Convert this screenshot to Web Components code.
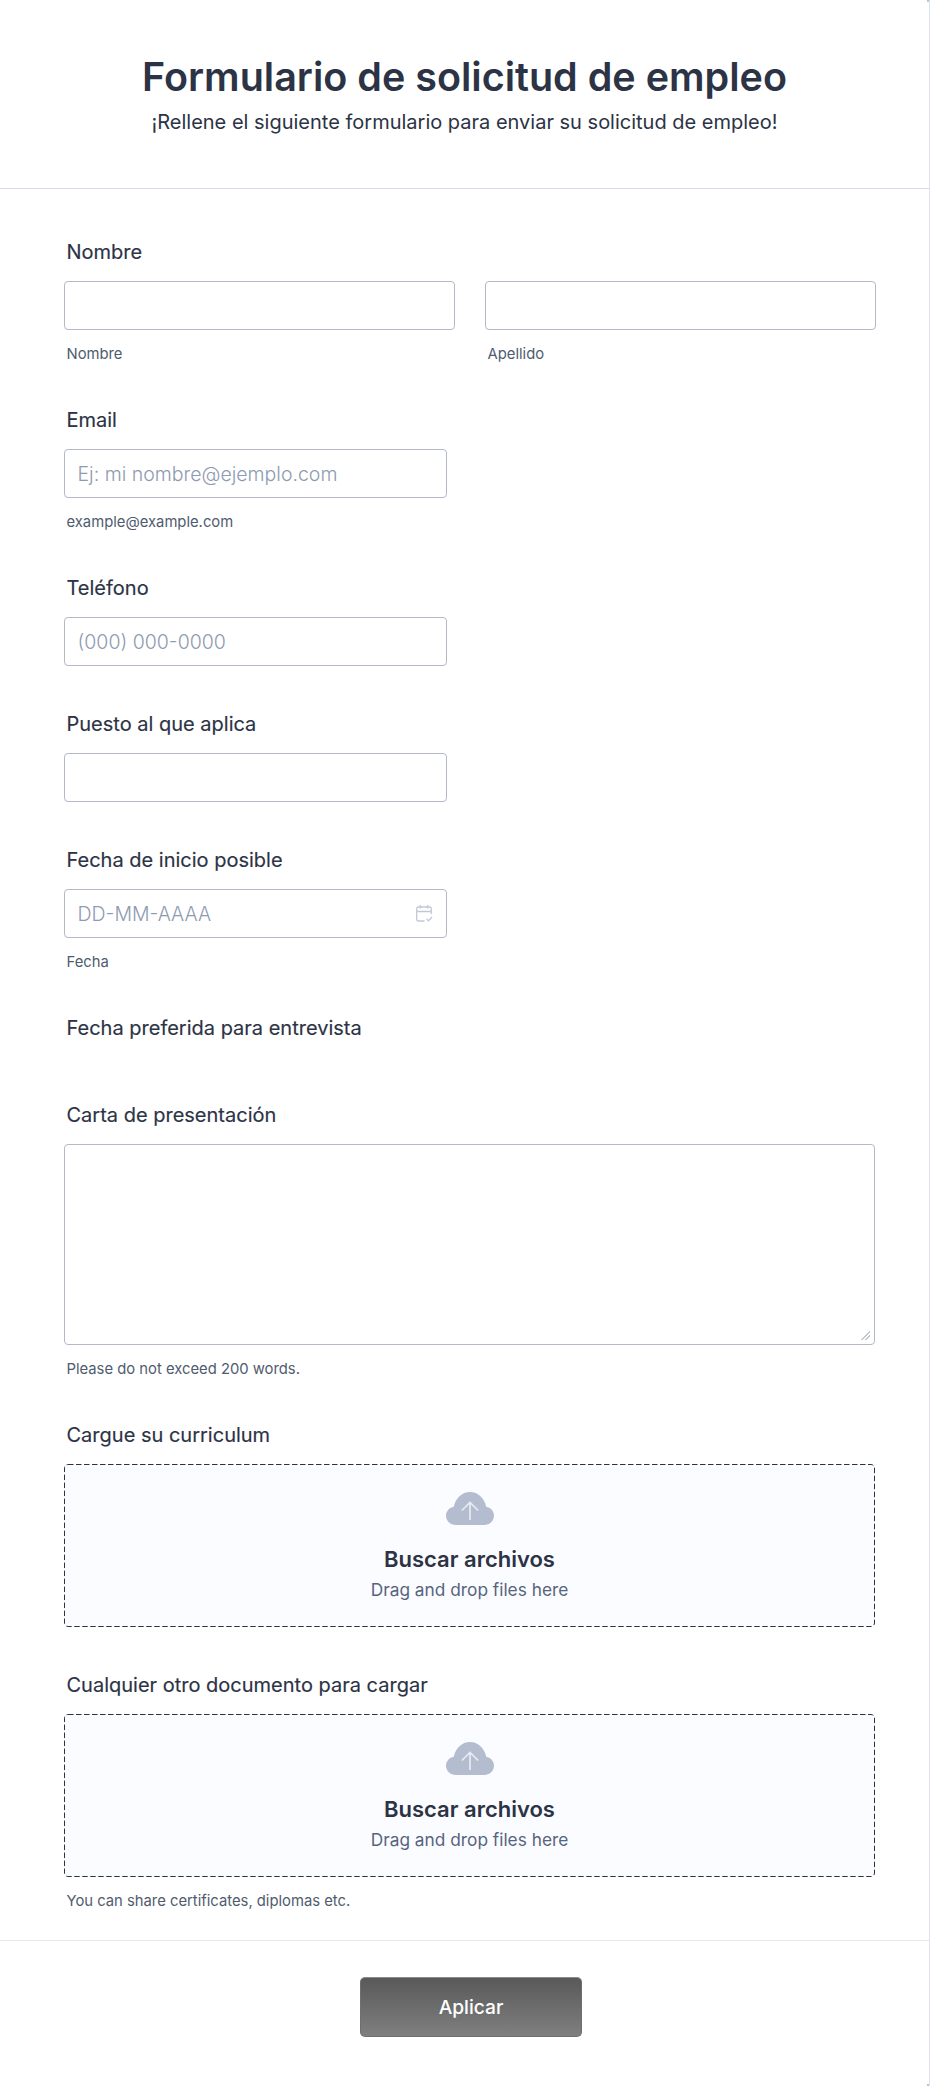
<!DOCTYPE html>
<html lang="es"><head><meta charset="utf-8"><title>Formulario de solicitud de empleo</title>
<style>
html,body{margin:0;padding:0;background:#fff}
body{font-family:Inter,"Liberation Sans",sans-serif;color:#2c3345}
</style></head><body>
<job-form>
  <form-header slot="header" title="Formulario de solicitud de empleo" sub="¡Rellene el siguiente formulario para enviar su solicitud de empleo!"></form-header>

  <form-field label="Nombre" first>
    <div style="display:grid;grid-template-columns:391px 391px;column-gap:30px">
      <text-box sub="Nombre" full></text-box>
      <text-box sub="Apellido" full></text-box>
    </div>
  </form-field>
  <form-field label="Email"><text-box placeholder="Ej: mi nombre@ejemplo.com" sub="example@example.com"></text-box></form-field>
  <form-field label="Teléfono"><text-box placeholder="(000) 000-0000"></text-box></form-field>
  <form-field label="Puesto al que aplica"><text-box></text-box></form-field>
  <form-field label="Fecha de inicio posible"><text-box placeholder="DD-MM-AAAA" sub="Fecha" calendar></text-box></form-field>
  <form-field label="Fecha preferida para entrevista"></form-field>
  <form-field label="Carta de presentación"><area-box sub="Please do not exceed 200 words."></area-box></form-field>
  <form-field label="Cargue su curriculum"><drop-zone></drop-zone></form-field>
  <form-field label="Cualquier otro documento para cargar"><drop-zone sub="You can share certificates, diplomas etc."></drop-zone></form-field>

  <form-footer slot="footer" label="Aplicar"></form-footer>
</job-form>
<script>
function def(name, css, html){
  customElements.define(name, class extends HTMLElement{
    connectedCallback(){
      if(this.shadowRoot) return;
      const r=this.attachShadow({mode:'open'});
      const a=n=>this.getAttribute(n);
      r.innerHTML='<style>'+css+'</style>'+html(a,n=>this.hasAttribute(n));
    }
  });
}
const CLOUD='<svg width="48" height="33" viewBox="0 0 48 33" aria-hidden="true"><path fill="#b4bccf" d="M10 33C4.400 33 0 28.900 0 23.800 0 19.300 3.300 15.600 7.800 14.800 9.300 6.300 16 0 24 0s14.700 6.300 16.200 14.800C44.700 15.600 48 19.300 48 23.800 48 28.900 43.600 33 38 33Z"/><path fill="none" stroke="#e8ebf3" stroke-width="1.700" d="M24 28V10.500M15.800 18.500 24 10.500 32.200 18.500"/></svg>';
const CAL='<svg width="18" height="19" viewBox="0 0 18 19" fill="none" stroke="#c3c8d6" stroke-width="1.300" aria-hidden="true"><path d="M9.500 17H3.500A1.800 1.800 0 0 1 1.700 15.200V4.800A1.800 1.800 0 0 1 3.500 3H14.500A1.800 1.800 0 0 1 16.300 4.800V10M1.700 7.500H16.300M5.300 1V4.500M12.700 1V4.500M11.500 15 13.500 16.800 17 13"/></svg>';
const SMALL='display:block;font:400 14.800px/18px Inter,sans-serif;color:#505b6e;padding:15px 0 0 2.500px;margin-bottom:-1px';

def('job-form',`:host{display:block;box-sizing:border-box;width:930px;height:2086px;border-right:1px solid #dfe3ee;background:linear-gradient(#a3cdf2,#a3cdf2) right top/2px 2px no-repeat,linear-gradient(#a3cdf2,#a3cdf2) right bottom/2px 2px no-repeat,#fff;overflow:hidden}
.list{padding:0 0 0 64px;display:flex;flex-direction:column}
`,()=>`<slot name="header"></slot><div class="list"><slot></slot></div><slot name="footer"></slot>`);

def('form-header',`:host{display:block;box-sizing:border-box;height:189px;border-bottom:1px solid #d8dce9;text-align:center;padding-top:53px}
h1{margin:0;font:600 39.500px/48px Inter,sans-serif;color:#2c3345}
p{margin:6px 0 0;font:400 20px/30px Inter,sans-serif;color:#2c3345}`,
a=>`<h1>${a('title')}</h1><p>${a('sub')}</p>`);

def('form-field',`:host{display:block;padding-top:45px}
:host([first]){padding-top:50px}
label{display:block;font:400 20px/24px Inter,sans-serif;color:#2c3345;padding:1px 0 17px 2.500px;-webkit-text-stroke:.15px #2c3345}`,
a=>`<label>${a('label')}</label><slot></slot>`);

def('text-box',`:host{display:block}
.box{box-sizing:border-box;width:383px;height:49px;border:1px solid #b4b9c8;border-radius:4px;background:#fff;padding:0 13px 0 12.500px;display:flex;align-items:center;justify-content:space-between;font:300 19.500px/24px Inter,sans-serif;color:#8e9ab0}
:host([full]) .box{width:100%}
svg{display:block}
small{${SMALL}}`,
(a,h)=>`<div class="box"><span>${a('placeholder')||''}</span>${h('calendar')?CAL:''}</div>${a('sub')?`<small>${a('sub')}</small>`:''}`);

def('area-box',`:host{display:block}
textarea{display:block;box-sizing:border-box;width:811px;height:201px;border:1px solid #b4b9c8;border-radius:4px;background:#fff;margin:0;outline:0}
textarea::-webkit-resizer{background:linear-gradient(135deg,transparent 0 46%,#c3c7d2 46% 56%,transparent 56% 71%,#c3c7d2 71% 81%,transparent 81%) 1.500px 1.500px/9px 9px no-repeat}
small{${SMALL}}`,
a=>`<textarea aria-label="Carta de presentación"></textarea><small>${a('sub')}</small>`);

def('drop-zone',`:host{display:block}
.z{position:relative;box-sizing:border-box;width:811px;height:163px;padding-top:28px;border-radius:4px;background:#fbfcff;display:flex;flex-direction:column;align-items:center}
.z>svg.i{display:block}
.dash{position:absolute;inset:0;width:811px;height:163px;fill:none;stroke:#2c3345;stroke-dasharray:5.500 2.500}
b{font:600 22px/28px Inter,sans-serif;color:#2c3345;margin-top:20px}
span{font:400 17.300px/24px Inter,sans-serif;color:#57647e;margin-top:5px}
small{${SMALL}}`,
a=>`<div class="z"><svg class="dash" aria-hidden="true"><rect x=".5" y=".5" width="810" height="162" rx="3.500"/></svg>${CLOUD.replace('<svg','<svg class="i"')}<b>Buscar archivos</b><span>Drag and drop files here</span></div>${a('sub')?`<small>${a('sub')}</small>`:''}`);

def('form-footer',`:host{display:block;box-sizing:border-box;margin-top:31px;border-top:1px solid #e3e8f0;padding:36px 0 0 13px;display:flex;justify-content:center}
button{box-sizing:border-box;width:222px;height:60px;border:1px solid #6f6f6f;border-top-color:#8a8a8a;border-radius:5px;background:linear-gradient(#595959,#7f7f7f);color:#fff;font:500 19.200px/24px Inter,sans-serif;padding:0}`,
a=>`<button type="button">${a('label')}</button>`);
</script>
</body></html>
